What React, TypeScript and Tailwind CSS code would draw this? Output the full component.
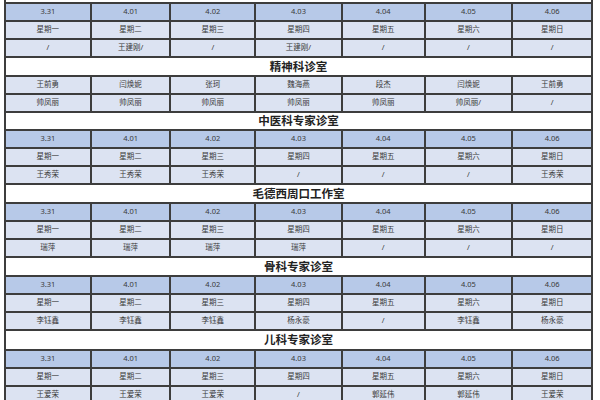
import React from "react";

const widths = [84, 80, 85, 87, 83, 88, 80];
const dates = ["3.31", "4.01", "4.02", "4.03", "4.04", "4.05", "4.06"];
const days = ["星期一", "星期二", "星期三", "星期四", "星期五", "星期六", "星期日"];

type Sec = { title?: string; rows: { kind: "date" | "light"; cells: string[] }[]; titleH?: number };

const std = (names: string[]) => [
  { kind: "date" as const, cells: dates },
  { kind: "light" as const, cells: days },
  { kind: "light" as const, cells: names },
];

const sections: Sec[] = [
  { rows: std(["/", "王建刚/", "/", "王建刚/", "/", "/", "/"]) },
  {
    title: "精神科诊室",
    titleH: 19,
    rows: [
      { kind: "light", cells: ["王前勇", "闫焕妮", "张珂", "魏海燕", "段杰", "闫焕妮", "王前勇"] },
      { kind: "light", cells: ["帅凤丽", "帅凤丽", "帅凤丽", "帅凤丽", "帅凤丽", "帅凤丽/", "/"] },
    ],
  },
  { title: "中医科专家诊室", titleH: 18, rows: std(["王秀荣", "王秀荣", "王秀荣", "/", "/", "/", "王秀荣"]) },
  { title: "毛德西周口工作室", titleH: 19, rows: std(["瑞萍", "瑞萍", "瑞萍", "瑞萍", "/", "/", "/"]) },
  { title: "骨科专家诊室", titleH: 19, rows: std(["李钰鑫", "李钰鑫", "李钰鑫", "杨永豪", "/", "李钰鑫", "杨永豪"]) },
  { title: "儿科专家诊室", titleH: 20, rows: std(["王爱荣", "王爱荣", "王爱荣", "/", "郭延伟", "郭延伟", "王爱荣"]) },
];

function Row({ kind, cells }: { kind: "date" | "light"; cells: string[] }) {
  const bg = kind === "date" ? "bg-[#b7c9e8]" : "bg-[#dce3f2]";
  return (
    <div className="flex h-[18px] border-t-2 border-[#3d3d3d]">
      {cells.map((c, i) => (
        <div
          key={i}
          style={{ width: widths[i] }}
          className={`${bg} ${i > 0 ? "border-l-2 border-[#3d3d3d]" : ""} flex items-center justify-center text-[7.5px] leading-none text-[#3a3a3a]`}
        >
          {c}
        </div>
      ))}
    </div>
  );
}

export default function App() {
  return (
    <div
      className="w-[600px] h-[400px] overflow-hidden bg-white"
      style={{ fontFamily: '"Noto Sans", "Noto Sans CJK SC", sans-serif' }}
    >
      <div className="ml-[4px] w-[589px] border-x-2 border-[#3d3d3d]">
        <div className="h-[2px] bg-white" />
        {sections.map((s, si) => (
          <React.Fragment key={si}>
            {s.title && (
              <div
                className="flex items-center justify-center border-t-2 border-[#3d3d3d] bg-white text-[11.5px] font-bold leading-none text-[#222]"
                style={{ height: s.titleH }}
              >
                {s.title}
              </div>
            )}
            {s.rows.map((r, ri) => (
              <Row key={ri} kind={r.kind} cells={r.cells} />
            ))}
          </React.Fragment>
        ))}
      </div>
    </div>
  );
}
